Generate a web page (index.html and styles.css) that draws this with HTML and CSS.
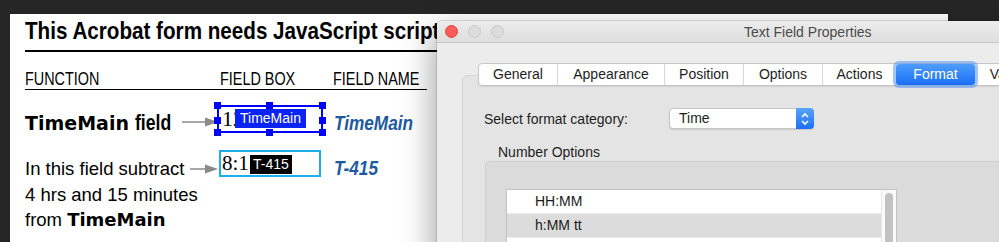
FILE: index.html
```html
<!DOCTYPE html>
<html lang="en">
<head>
    <meta charset="UTF-8">
    <title>Text Field Properties</title>
    <link rel="stylesheet" href="styles.css">
</head>
<body>
    <div class="desktop">
        <!-- Documento -->
        <div class="page">
            <h1 class="doc-title"><span class="cond">This Acrobat form needs JavaScript script</span></h1>
            <div class="col-heads">
                <span class="cond">FUNCTION</span>
                <span class="cond">FIELD BOX</span>
                <span class="cond">FIELD NAME</span>
            </div>

            <div class="form-row row-main">
                <div class="func"><b class="heavy">TimeMain</b> <b class="cond">field</b></div>
                <svg class="arrow" width="36" height="10" viewBox="0 0 36 10">
                    <line x1="0" y1="5" x2="26" y2="5" stroke="#8a8a8a" stroke-width="1.5"/>
                    <polygon points="23,0.5 36,5 23,9.5" fill="#8a8a8a"/>
                </svg>
                <div class="field-box selected">
                    <span class="field-value">12</span>
                    <span class="field-label">TimeMain</span>
                    <i class="handle h-tl"></i><i class="handle h-tm"></i><i class="handle h-tr"></i>
                    <i class="handle h-ml"></i><i class="handle h-mr"></i>
                    <i class="handle h-bl"></i><i class="handle h-bm"></i><i class="handle h-br"></i>
                </div>
                <div class="field-name"><span class="cond">TimeMain</span></div>
            </div>

            <div class="form-row row-sub">
                <div class="func">In this field subtract<br>4 hrs and 15 minutes<br>from <b class="heavy">TimeMain</b></div>
                <svg class="arrow arrow-short" width="28" height="10" viewBox="0 0 28 10">
                    <line x1="0" y1="5" x2="18" y2="5" stroke="#8a8a8a" stroke-width="1.5"/>
                    <polygon points="15,0.5 28,5 15,9.5" fill="#8a8a8a"/>
                </svg>
                <div class="field-box plain">
                    <span class="field-value">8:15</span>
                    <span class="field-label dark">T-415</span>
                </div>
                <div class="field-name"><span class="cond">T-415</span></div>
            </div>
        </div>

        <!-- Janela de propriedades -->
        <div class="dialog">
            <div class="titlebar">
                <span class="light red"></span>
                <span class="light"></span>
                <span class="light"></span>
                <span class="window-title">Text Field Properties</span>
            </div>
            <div class="dialog-body">
                <div class="tabs">
                    <span class="tab">General</span>
                    <span class="tab tab-wide">Appearance</span>
                    <span class="tab">Position</span>
                    <span class="tab">Options</span>
                    <span class="tab tab-narrow">Actions</span>
                    <span class="tab active">Format</span>
                    <span class="tab">Validate</span>
                    <span class="tab">Calculate</span>
                </div>
                <div class="tab-panel">
                    <div class="select-row">
                        <span class="select-label">Select format category:</span>
                        <div class="popup">
                            <span class="popup-value">Time</span>
                            <span class="stepper">
                                <svg width="10" height="14" viewBox="0 0 10 14">
                                    <polyline points="2,5 5,2 8,5" fill="none" stroke="#fff" stroke-width="1.6"/>
                                    <polyline points="2,9 5,12 8,9" fill="none" stroke="#fff" stroke-width="1.6"/>
                                </svg>
                            </span>
                        </div>
                    </div>
                    <div class="group-title">Number Options</div>
                    <div class="group">
                        <div class="list">
                            <div class="list-rows">
                                <div class="list-row">HH:MM</div>
                                <div class="list-row selected">h:MM tt</div>
                                <div class="list-row">HH:MM:ss</div>
                            </div>
                            <div class="scrollbar"><div class="thumb"></div></div>
                        </div>
                    </div>
                </div>
            </div>
        </div>
    </div>
</body>
</html>
```

FILE: styles.css
```css
body {
    margin: 0;
    background-color: #262626;
    overflow: hidden;
}

.desktop {
    position: relative;
    width: 999px;
    height: 242px;
    overflow: hidden;
}

/* Documento */
.page {
    width: 938px;
    height: 260px;
    margin: 14px 0 0 10px;
    padding: 3px 15px 0 15px;
    box-sizing: border-box;
    background-color: #ffffff;
    color: #000000;
    font-family: "Liberation Sans", Arial, sans-serif;
}

/* fonte condensada simulada */
.cond {
    display: inline-block;
    white-space: nowrap;
    transform-origin: left center;
    transform: scaleX(0.8);
}

.doc-title {
    margin: 0;
    font-size: 24px;
    line-height: 28px;
    font-weight: 700;
    padding-bottom: 5px;
    border-bottom: 2px solid #000000;
    white-space: nowrap;
    overflow: hidden;
}

.doc-title .cond {
    transform: scaleX(0.86);
}

.col-heads {
    display: grid;
    grid-template-columns: 195px 113px auto;
    width: 402px;
    margin-top: 17px;
    font-size: 18px;
    line-height: 20px;
    white-space: nowrap;
    border-bottom: 1px solid #000000;
}

.form-row {
    display: grid;
    grid-template-columns: 157px 36px 116px auto;
    align-items: start;
}

.row-main {
    margin-top: 15px;
    height: 28px;
}

.row-sub {
    margin-top: 17px;
}

.func {
    white-space: nowrap;
    padding-top: 6px;
}

.row-main .func {
    font-size: 22px;
    line-height: 24px;
}

.row-main .func .cond {
    transform: scaleX(0.8);
}

.row-sub .func {
    font-size: 18.5px;
    line-height: 25.5px;
}

.heavy {
    font-family: "DejaVu Sans", sans-serif;
    font-weight: 700;
    font-size: 18px;
}

.row-main .heavy {
    font-size: 19px;
}

.arrow {
    display: block;
    margin-top: 12px;
}

.arrow-short {
    justify-self: end;
    margin-top: 14px;
}

.field-box {
    position: relative;
    box-sizing: border-box;
    font-family: "Liberation Serif", "Times New Roman", serif;
    color: #000000;
}

.field-box.selected {
    width: 106px;
    height: 28px;
    margin-left: -1px;
    border: 2px solid #0000ff;
    font-size: 22px;
    line-height: 24px;
    padding-left: 3px;
}

.field-box.plain {
    width: 102px;
    height: 27px;
    margin-left: 1px;
    border: 2px solid #1cb0ea;
    font-size: 21px;
    line-height: 23px;
    padding-left: 1px;
}

.field-label {
    position: absolute;
    font-family: "Liberation Sans", Arial, sans-serif;
    font-size: 14px;
    line-height: 19px;
    color: #ffffff;
    background-color: #0a24f5;
    padding: 0 5px;
    left: 16px;
    top: 2px;
}

.field-label.dark {
    background-color: #000000;
    padding: 0 3px;
    left: 29px;
    top: 3px;
}

.handle {
    position: absolute;
    width: 7px;
    height: 7px;
    background-color: #0000ff;
}

.h-tl { left: -5px; top: -5px; }
.h-tm { left: 47px; top: -5px; }
.h-tr { right: -5px; top: -5px; }
.h-ml { left: -5px; top: 10px; }
.h-mr { right: -5px; top: 10px; }
.h-bl { left: -5px; bottom: -5px; }
.h-bm { left: 47px; bottom: -5px; }
.h-br { right: -5px; bottom: -5px; }

.field-name {
    padding-top: 6px;
    font-size: 20px;
    line-height: 24px;
    font-weight: 700;
    font-style: italic;
    white-space: nowrap;
    color: #1e5aa0;
}

.field-name .cond {
    transform: scaleX(0.86);
}

/* Janela */
.dialog {
    position: absolute;
    left: 437px;
    top: 21px;
    width: 620px;
    height: 260px;
    background-color: #ececec;
    border-radius: 5px 5px 0 0;
    box-shadow: 0 0 0 1px rgba(0, 0, 0, 0.12), -4px 10px 32px rgba(0, 0, 0, 0.35);
    font-family: "Helvetica Neue", "Liberation Sans", Arial, sans-serif;
    color: #1e1e1e;
    font-size: 14px;
}

.titlebar {
    display: flex;
    align-items: center;
    height: 21px;
    padding-left: 8px;
    border-bottom: 1px solid #c6c6c6;
    border-radius: 5px 5px 0 0;
    background: linear-gradient(#ececec, #dedede);
}

.light {
    width: 11px;
    height: 11px;
    margin-right: 10px;
    border-radius: 50%;
    background-color: #dcdcdc;
    border: 1px solid #c9c9c9;
}

.light.red {
    background-color: #fc5e57;
    border-color: #e2463f;
}

.window-title {
    margin-left: 230px;
    color: #4b4b4b;
    font-size: 14px;
}

.dialog-body {
    padding: 20px 0 0 25px;
}

.tabs {
    position: relative;
    z-index: 1;
    display: flex;
    height: 21px;
    margin-left: 16px;
    background-color: #ffffff;
    border: 1px solid #c6c6c6;
    border-radius: 4px;
    box-shadow: 0 1px 1px rgba(0, 0, 0, 0.08);
    width: max-content;
}

.tab {
    width: 79px;
    flex: none;
    text-align: center;
    line-height: 21px;
    border-left: 1px solid #d8d8d8;
    box-sizing: border-box;
}

.tab:first-child {
    border-left: none;
    width: 78px;
}

.tab-wide {
    width: 107px;
}

.tab-narrow {
    width: 74px;
}

.tab.active {
    color: #ffffff;
    border-left: none;
    border-radius: 3px;
    background: linear-gradient(#4f9dfc, #1a6ff5);
    box-shadow: 0 0 0 3px rgba(90, 150, 245, 0.55);
}

.tab.active + .tab {
    border-left: none;
}

.tab-panel {
    margin-top: -11px;
    height: 200px;
    padding: 32px 0 0 21px;
    background-color: #e4e4e4;
    border: 1px solid #d4d4d4;
    border-radius: 6px;
}

.select-row {
    display: flex;
    align-items: center;
    height: 21px;
}

.select-label {
    width: 185px;
    flex: none;
}

.popup {
    display: flex;
    width: 145px;
    height: 21px;
    box-sizing: border-box;
    background-color: #ffffff;
    border: 1px solid #c6c6c6;
    border-radius: 4px;
    box-shadow: 0 1px 1px rgba(0, 0, 0, 0.12);
}

.popup-value {
    flex: 1;
    padding-left: 9px;
    line-height: 19px;
}

.stepper {
    display: flex;
    align-items: center;
    justify-content: center;
    width: 18px;
    margin: -1px -1px -1px 0;
    border-radius: 0 4px 4px 0;
    background: linear-gradient(#5aa4fc, #1b70f5);
}

.group-title {
    margin: 15px 0 0 14px;
    line-height: 17px;
}

.group {
    margin-left: 1px;
    height: 120px;
    padding: 27px 0 0 20px;
    background-color: #dbdbdb;
    border: 1px solid #cecece;
    border-radius: 5px;
}

.list {
    display: flex;
    width: 391px;
    height: 100px;
    box-sizing: border-box;
    background-color: #ffffff;
    border: 1px solid #c2c2c2;
}

.list-rows {
    flex: 1;
}

.list-row {
    height: 23px;
    line-height: 23px;
    padding-left: 28px;
    color: #1a1a1a;
    border-bottom: 1px solid #ececec;
}

.list-row.selected {
    background-color: #dcdcdc;
}

.scrollbar {
    width: 14px;
    background-color: #fafafa;
    border-left: 1px solid #e6e6e6;
}

.thumb {
    width: 8px;
    height: 80px;
    margin: 3px 0 0 3px;
    border-radius: 4px;
    background-color: #c2c2c2;
}
```
